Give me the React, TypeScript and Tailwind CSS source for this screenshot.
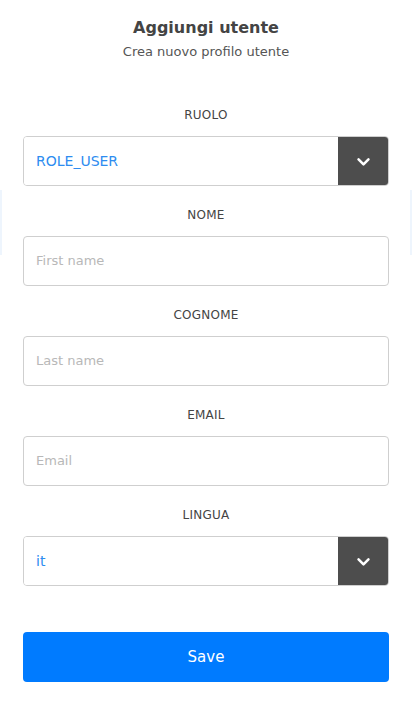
import React from 'react';

const font = { fontFamily: '"DejaVu Sans", "Open Sans", sans-serif' };

function Chevron() {
  return (
    <svg width="17" height="17" viewBox="0 0 24 24" fill="none" stroke="white" strokeWidth="3.6" strokeLinecap="round" strokeLinejoin="round">
      <polyline points="5 9 12 16 19 9" />
    </svg>
  );
}

function Field({ label, children }: { label: string; children: React.ReactNode }) {
  return (
    <div className="flex flex-col">
      <div className="h-5 flex items-center justify-center text-[12px] tracking-[0.02em] text-[#444]">{label}</div>
      <div className="mt-[11px]">{children}</div>
    </div>
  );
}

function Select({ value }: { value: string }) {
  return (
    <div className="flex h-[50px] rounded-[4px] border border-[#cfcfcf] overflow-hidden">
      <div className="flex-1 flex items-center px-3 text-[14px] text-[#2d8cf0] bg-white">{value}</div>
      <div className="w-[50px] bg-[#4d4d4d] flex items-center justify-center">
        <Chevron />
      </div>
    </div>
  );
}

function Input({ placeholder }: { placeholder: string }) {
  return (
    <div className="flex h-[50px] items-center rounded-[4px] border border-[#cfcfcf] px-3 text-[13px] text-[#b8b8b8] bg-white">
      {placeholder}
    </div>
  );
}

export default function App() {
  return (
    <div className="relative w-[412px] h-[705px] bg-white overflow-hidden" style={font}>
      <div className="absolute left-0 top-[190px] h-[65px] w-[2px] bg-[#eef5fd]" />
      <div className="absolute right-0 top-[190px] h-[65px] w-[2px] bg-[#eef5fd]" />
      <div className="relative px-[23px]">
        <div className="pt-4 flex flex-col items-center">
          <h1 className="h-6 flex items-center text-[16px] font-semibold text-[#444]">Aggiungi utente</h1>
          <p className="mt-[2px] h-5 flex items-center text-[13px] text-[#555]">Crea nuovo profilo utente</p>
        </div>
        <div className="mt-[43px] flex flex-col gap-[19px]">
          <Field label="RUOLO"><Select value="ROLE_USER" /></Field>
          <Field label="NOME"><Input placeholder="First name" /></Field>
          <Field label="COGNOME"><Input placeholder="Last name" /></Field>
          <Field label="EMAIL"><Input placeholder="Email" /></Field>
          <Field label="LINGUA"><Select value="it" /></Field>
        </div>
        <button className="mt-[46px] w-full h-[50px] rounded-[4px] bg-[#007bff] text-white text-[15px]">Save</button>
      </div>
    </div>
  );
}
